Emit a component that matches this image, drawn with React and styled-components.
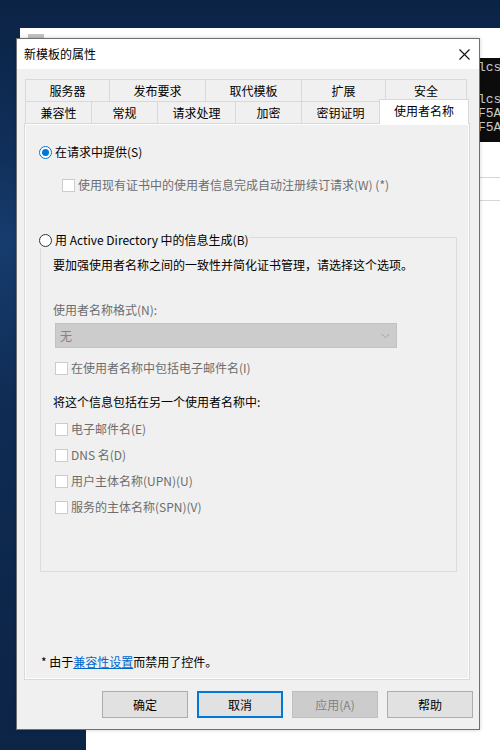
import React from 'react'
import styled, { createGlobalStyle } from 'styled-components'

const GlobalStyle = createGlobalStyle`
  html, body {
    margin: 0;
    padding: 0;
  }
  body {
    font-family: "Noto Sans CJK SC", "Noto Sans", sans-serif;
    font-size: 12px;
    color: #000;
  }
  * {
    box-sizing: border-box;
  }
`

const Desktop = styled.div`
  position: relative;
  width: 500px;
  height: 750px;
  overflow: hidden;
  background: linear-gradient(
    180deg,
    #0b2345 0%,
    #102f5a 20%,
    #163c6e 32%,
    #0f2b53 55%,
    #0c2446 100%
  );
`

const BackStrip = styled.div`
  position: absolute;
  left: 20px;
  top: 28px;
  right: 0;
  height: 14px;
  background: #fff;

  &::before {
    content: '';
    position: absolute;
    left: 8px;
    top: 6px;
    width: 16px;
    height: 5px;
    background: #9a9a9a;
    opacity: 0.6;
  }
`

const BackWindow = styled.div`
  position: absolute;
  left: 86px;
  top: 28px;
  right: 0;
  bottom: 0;
  background: #fff;
`

const RuleLine = styled.div`
  position: absolute;
  left: 470px;
  right: 0;
  top: ${({ $y }) => $y}px;
  height: 1px;
  background: #d6d6d6;
`

const Console = styled.div`
  position: absolute;
  left: 470px;
  top: 58px;
  width: 30px;
  height: 84px;
  background: #0c0c0c;
  color: #c8c8c8;
  font-family: "Liberation Mono", monospace;
  font-size: 13px;
  line-height: 14px;
  padding: 3px 0 0 8px;
  white-space: pre;
`

const ConsoleGap = styled.div`
  height: ${({ $h }) => $h}px;
`

const Dialog = styled.div`
  position: absolute;
  left: 16px;
  top: 38px;
  width: 464px;
  height: 692px;
  border: 1px solid #6f6f6f;
  background: #f0f0f0;
  display: flex;
  flex-direction: column;
  box-shadow: 0 0 4px rgba(0, 0, 0, 0.2);
`

const TitleBar = styled.div`
  height: 30px;
  background: #fff;
  display: flex;
  align-items: center;
  justify-content: space-between;
  padding: 0 9px 0 7px;
  line-height: 16px;
`

const Body = styled.div`
  flex: 1;
  display: flex;
  flex-direction: column;
  padding: 10px 9px 0 7px;
`

const TabRow = styled.div`
  display: flex;
  margin-left: 1px;
  height: 22px;
`

const Tab = styled.div`
  width: ${({ $w }) => $w}px;
  flex: none;
  height: ${({ $selected }) => ($selected ? 25 : 22)}px;
  margin-top: ${({ $selected }) => ($selected ? -2 : 0)}px;
  position: relative;
  z-index: ${({ $selected }) => ($selected ? 2 : 0)};
  background: ${({ $selected }) => ($selected ? '#fff' : '#f0f0f0')};
  border-top: 1px solid #d9d9d9;
  border-left: 1px solid #d9d9d9;
  border-right: ${({ $last }) => ($last ? '1px solid #d9d9d9' : 'none')};
  display: flex;
  align-items: ${({ $selected }) => ($selected ? 'flex-start' : 'center')};
  padding-top: ${({ $selected }) => ($selected ? 3 : 0)}px;
  justify-content: center;
  line-height: 16px;
  white-space: nowrap;
`

const Panel = styled.div`
  height: 557px;
  border: 1px solid #d9d9d9;
  box-shadow: inset 1px 1px 0 #fdfdfd, inset -1px -1px 0 #fdfdfd;
  display: flex;
  flex-direction: column;
  position: relative;
  z-index: 1;
`

const OptionRow = styled.label`
  display: flex;
  align-items: center;
  gap: ${({ $gap }) => $gap ?? 3}px;
  height: 16px;
  line-height: 16px;
  margin-top: ${({ $mt }) => $mt || 0}px;
  margin-left: ${({ $ml }) => $ml || 0}px;
  color: ${({ $disabled }) => ($disabled ? '#6d6d6d' : '#000')};
  white-space: nowrap;
`

const Radio = styled.span`
  width: 13px;
  height: 13px;
  flex: none;
  border-radius: 50%;
  background: #fff;
  border: 1px solid ${({ $checked }) => ($checked ? '#0078d7' : '#333')};
  display: flex;
  align-items: center;
  justify-content: center;

  &::after {
    content: '';
    width: 7px;
    height: 7px;
    border-radius: 50%;
    background: ${({ $checked }) => ($checked ? '#0078d7' : 'transparent')};
  }
`

const CheckBox = styled.span`
  width: 13px;
  height: 13px;
  flex: none;
  background: #fff;
  border: 1px solid #cccccc;
`

const Group = styled.fieldset`
  margin: 33px 12px 0 15px;
  padding: 0;
  min-width: 0;
  border: 1px solid #dcdcdc;
`

const Legend = styled.legend`
  padding: 6px 0 0 0;
  margin-left: -2px;
  display: flex;
  align-items: center;
  gap: 3px;
  line-height: 16px;
  white-space: nowrap;
`

const GroupInner = styled.div`
  padding: 9px 12px 56px 12px;
  display: flex;
  flex-direction: column;
`

const Text = styled.div`
  height: 16px;
  line-height: 16px;
  margin-top: ${({ $mt }) => $mt || 0}px;
  color: ${({ $disabled }) => ($disabled ? '#6d6d6d' : '#000')};
  white-space: nowrap;
`

const Combo = styled.div`
  margin: 5px 0 0 2px;
  width: 342px;
  height: 25px;
  background: #cccccc;
  border: 1px solid #c2c2c2;
  display: flex;
  align-items: center;
  justify-content: space-between;
  padding: 0 6px 0 4px;
  color: #838383;
  line-height: 16px;
`

const CheckList = styled.div`
  display: flex;
  flex-direction: column;
  gap: 10px;
  margin-top: 11px;
  margin-left: 2px;
`

const Footer = styled.div`
  margin-top: auto;
  margin-bottom: 9px;
  padding-left: 16px;
  height: 16px;
  line-height: 16px;
  white-space: nowrap;
`

const Link = styled.a`
  color: #0066cc;
  text-decoration: underline;
`

const ButtonRow = styled.div`
  display: flex;
  justify-content: flex-end;
  gap: 9px;
  margin: 11px -3px 0 0;
`

const Button = styled.button`
  width: 86px;
  height: 27px;
  font-family: inherit;
  font-size: 12px;
  padding: 0;
  line-height: 16px;
  color: ${({ $disabled }) => ($disabled ? '#838383' : '#000')};
  background: ${({ $disabled }) => ($disabled ? '#cccccc' : '#e1e1e1')};
  border: ${({ $focused, $disabled }) =>
    $focused ? '2px solid #0078d7' : `1px solid ${$disabled ? '#bfbfbf' : '#adadad'}`};
`

function CloseIcon() {
  return (
    <svg width="11" height="11" viewBox="0 0 11 11">
      <path d="M0.5 0.5 L10.5 10.5 M10.5 0.5 L0.5 10.5" stroke="#111" strokeWidth="1.1" />
    </svg>
  )
}

function Chevron() {
  return (
    <svg width="9" height="6" viewBox="0 0 9 6">
      <path d="M0.5 0.8 L4.5 4.8 L8.5 0.8" fill="none" stroke="#a3a3a3" strokeWidth="1" />
    </svg>
  )
}

const topTabs = [
  ['服务器', 84],
  ['发布要求', 96],
  ['取代模板', 96],
  ['扩展', 84],
  ['安全', 82],
]

const bottomTabs = [
  ['兼容性', 66],
  ['常规', 66],
  ['请求处理', 78],
  ['加密', 66],
  ['密钥证明', 78],
  ['使用者名称', 90, true],
]

const altNames = ['电子邮件名(E)', 'DNS 名(D)', '用户主体名称(UPN)(U)', '服务的主体名称(SPN)(V)']

function Tabs({ tabs }) {
  return (
    <TabRow>
      {tabs.map(([label, w, selected], i) => (
        <Tab key={label} $w={w} $selected={selected} $last={i === tabs.length - 1}>
          {label}
        </Tab>
      ))}
    </TabRow>
  )
}

export default function App() {
  return (
    <Desktop>
      <GlobalStyle />
      <BackWindow />
      <BackStrip />
      <RuleLine $y={177} />
      <RuleLine $y={200} />
      <Console>
        <div>lcs</div>
        <ConsoleGap $h={18} />
        <div>lcs</div>
        <div>F5A</div>
        <div>F5A</div>
      </Console>

      <Dialog>
        <TitleBar>
          <span>新模板的属性</span>
          <CloseIcon />
        </TitleBar>
        <Body>
          <Tabs tabs={topTabs} />
          <Tabs tabs={bottomTabs} />
          <Panel>
            <OptionRow $mt={20} $ml={14}>
              <Radio $checked />
              在请求中提供(S)
            </OptionRow>
            <OptionRow $mt={17} $ml={37} $disabled>
              <CheckBox />
              使用现有证书中的使用者信息完成自动注册续订请求(W) (*)
            </OptionRow>

            <Group>
              <Legend>
                <Radio />
                用 Active Directory 中的信息生成(B)
              </Legend>
              <GroupInner>
                <Text>要加强使用者名称之间的一致性并简化证书管理，请选择这个选项。</Text>
                <Text $mt={29} $disabled>使用者名称格式(N):</Text>
                <Combo>
                  <span>无</span>
                  <Chevron />
                </Combo>
                <OptionRow $mt={12} $ml={2} $disabled>
                  <CheckBox />
                  在使用者名称中包括电子邮件名(I)
                </OptionRow>
                <Text $mt={18}>将这个信息包括在另一个使用者名称中:</Text>
                <CheckList>
                  {altNames.map((name) => (
                    <OptionRow key={name} $disabled>
                      <CheckBox />
                      {name}
                    </OptionRow>
                  ))}
                </CheckList>
              </GroupInner>
            </Group>

            <Footer>
              * 由于<Link href="#">兼容性设置</Link>而禁用了控件。
            </Footer>
          </Panel>

          <ButtonRow>
            <Button>确定</Button>
            <Button $focused>取消</Button>
            <Button $disabled>应用(A)</Button>
            <Button>帮助</Button>
          </ButtonRow>
        </Body>
      </Dialog>
    </Desktop>
  )
}
